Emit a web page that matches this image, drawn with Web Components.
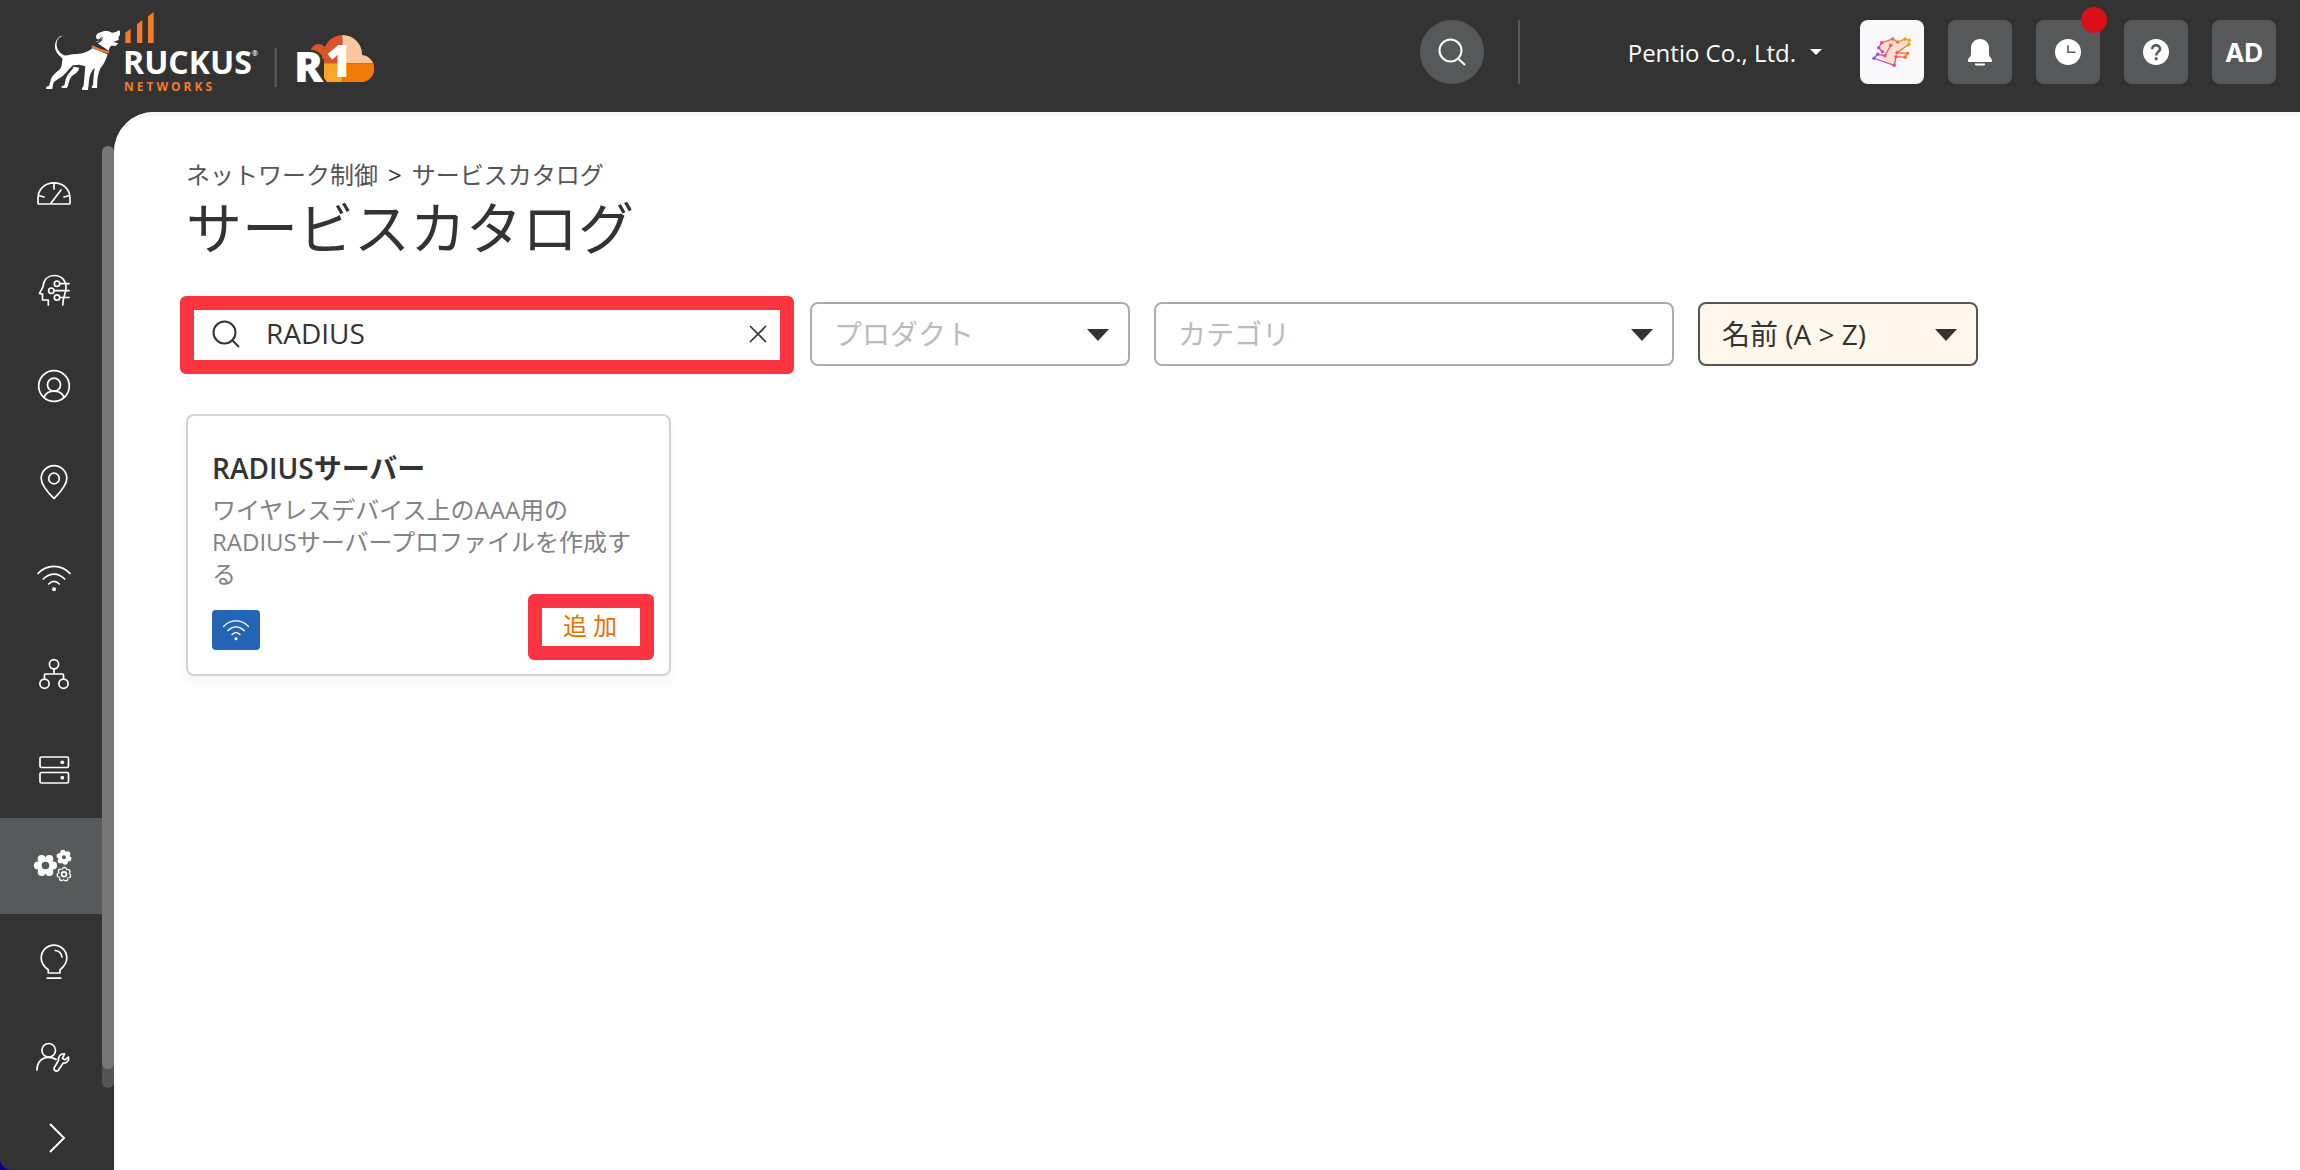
<!DOCTYPE html>
<html lang="ja">
<head>
<meta charset="utf-8">
<title>サービスカタログ</title>
<style>
html,body{margin:0;height:100%}
body{background:#06007a;color:#333;font-family:"Open Sans","Noto Sans CJK JP",sans-serif;font-size:24px}
</style>
</head>
<body>
<app-shell>
  <app-header slot="header"></app-header>
  <side-nav slot="nav"></side-nav>
  <catalog-page>
    <filter-search value="RADIUS"></filter-search>
    <filter-select label="プロダクト" basis="320"></filter-select>
    <filter-select label="カテゴリ" basis="520"></filter-select>
    <filter-select label="名前 (A &gt; Z)" basis="280" active></filter-select>
    <service-card slot="cards">
      <span slot="title">RADIUSサーバー</span>
      ワイヤレスデバイス上のAAA用のRADIUSサーバープロファイルを作成する
      <span slot="action">追 加</span>
    </service-card>
  </catalog-page>
</app-shell>
<script>
const define = (name, render) => customElements.define(name, class extends HTMLElement {
  connectedCallback() {
    if (this.shadowRoot) return;
    const root = this.attachShadow({ mode: "open" });
    root.innerHTML = `<style>*{box-sizing:border-box}:host{display:block;box-sizing:border-box}button,input,select{font:inherit;color:inherit;margin:0}button{border:0;background:none;padding:0;cursor:pointer}svg{display:block;flex:none;overflow:visible}</style>` + render(this);
  }
});

/* Scalloped gear: a disc with a ring of round lobes. */
const gear = (cx, cy, r, lobe, n, turn = 0) => {
  let s = `<circle cx="${cx}" cy="${cy}" r="${r}"/>`;
  for (let i = 0; i < n; i++) {
    const a = turn + i * 2 * Math.PI / n;
    s += `<circle cx="${(cx + r * Math.cos(a)).toFixed(2)}" cy="${(cy + r * Math.sin(a)).toFixed(2)}" r="${lobe}"/>`;
  }
  return s;
};

const ICONS = {
  gauge: `<path d="M2 27V22.500C2 13 9 6.800 18 6.800S34 13 34 22.500V27a1 1 0 0 1-1 1H3a1 1 0 0 1-1-1zM18 7v6M2.500 19.500l5.500 1.500M33.500 19.500L28 21M14.700 27.500L25 14"/>`,
  ai: `<path d="M12.300 33v-5H6.500v-5.800L3.500 21.500C4.500 18.500 7 16.500 7.200 13.500C8 7 12.500 3.500 18.500 3.500C25.500 3.500 30 8.500 30 15.500C30 22 27 24 26.800 33M24 11.700h9M18.300 18.700H33M24 25.500h9"/><circle cx="21" cy="11.700" r="2.700"/><circle cx="15.300" cy="18.700" r="2.700"/><circle cx="21" cy="25.500" r="2.700"/>`,
  user: `<circle cx="18" cy="18" r="15.300"/><circle cx="18" cy="16.700" r="6.500"/><path d="M8 29C10 25 13.500 23.200 18 23.200S26 25 28 29"/>`,
  pin: `<path d="M18 34.500C14 30.500 5.200 22 5.200 14.500a12.800 12.800 0 0 1 25.600 0C30.800 22 22 30.500 18 34.500z"/><circle cx="18" cy="14.500" r="5.300"/>`,
  wifi: `<path d="M2 13.5C11 4 25 4 34 13.5M7.300 19C14 12.500 22 12.500 28.700 19M12.700 24C16 20.700 20 20.700 23.300 24"/><circle cx="18" cy="29.300" r="2" fill="currentColor" stroke="none"/>`,
  tree: `<circle cx="18" cy="8.300" r="4.600"/><circle cx="8.500" cy="27.700" r="4.600"/><circle cx="27.500" cy="27.700" r="4.600"/><path d="M18 13v5M8.500 23v-4a1 1 0 0 1 1-1h17a1 1 0 0 1 1 1v4"/>`,
  server: `<rect x="4" y="5" width="28.500" height="10.500" rx="1.500"/><rect x="4" y="20.500" width="28.500" height="10.500" rx="1.500"/><circle cx="26.300" cy="10.300" r="1.900" fill="currentColor" stroke="none"/><circle cx="26.300" cy="25.700" r="1.900" fill="currentColor" stroke="none"/>`,
  gears: `<g fill="currentColor" stroke="none">${gear(9.5, 17.5, 7.6, 4, 6, 0)}${gear(28, 9.3, 4.9, 2.7, 6, .3)}${gear(28, 26.3, 5, 2.5, 7, .3)}</g><g fill="#565859" stroke="none"><circle cx="9.500" cy="17.500" r="3.800"/><circle cx="28" cy="9.300" r="2"/>${gear(28, 26.3, 4.2, 1.9, 7, .3)}</g><circle cx="28" cy="26.300" r="2.400"/>`,
  bulb: `<path d="M12.300 29v-3.200C8.500 23 5.200 19.500 5.200 14a12.800 12.800 0 0 1 25.600 0C30.800 19.500 27.500 23 24 25.800V29zM11.300 34.200h13.500M19.200 6.500C23 7 25.500 9.500 26 13"/>`,
  admin: `<circle cx="12.700" cy="10.300" r="6.800"/><path d="M1 30C1 22 6 17.300 12.500 17.300C15.500 17.300 18 18 20 19.500M28.500 13.800L26.500 18.500L29 19.800L32.500 17C33.500 20.500 30.500 23.500 27.200 23L22.500 30C21 32.200 17 30.500 18.300 27.500L22.500 20.500C22 16.500 24.500 13.500 28.500 13.800z"/>`
};

define("line-icon", el => `<style>:host{width:36px;height:36px}svg{width:100%;height:100%}</style>
<svg viewBox="0 0 36 36" fill="none" stroke="currentColor" stroke-width="1.700" stroke-linejoin="round" stroke-linecap="round" aria-hidden="true">${ICONS[el.getAttribute("name")]}</svg>`);

define("app-shell", () => `<style>
:host{display:flex;flex-direction:column;height:100vh;background:#333;border-bottom-left-radius:12px;overflow:hidden}
.row{display:flex;flex:1;min-height:0}
main{flex:1;min-width:0;background:#fff;border-top-left-radius:40px;box-shadow:inset 0 4px 0 #f8f8f8;overflow:auto}
</style><slot name="header"></slot><div class="row"><slot name="nav"></slot><main><slot></slot></main></div>`);

define("brand-logo", () => `<style>text{font-family:"Open Sans",sans-serif;font-weight:700}.mark{font-weight:800}</style>
<svg width="340" height="90" viewBox="40 5 340 90" role="img" aria-label="RUCKUS Networks R1">
<defs><clipPath id="cloud"><circle cx="1028" cy="163" r="58"/><circle cx="1082" cy="206" r="41"/><rect x="972" y="180" width="110" height="67"/><circle cx="956" cy="157" r="25"/></clipPath></defs>
<g transform="scale(.33333)">
<g fill="#fff">
<path d="M184 107C168 114 161 135 167 151C171 162 180 169 188 176C184 189 188 201 176 211C164 221 154 229 151 245L147 258L139 260L138 267H157L160 250C164 242 177 236 188 228C199 219 207 207 219 196L238 194L256 199C254 218 253 240 250 260L246 263V270H264L267 243C268 228 273 213 284 203C281 222 280 240 279 256L275 259L276 264H291L292 243C293 228 297 216 301 205C311 196 317 180 323 163L277 145C264 155 247 163 226 162C212 163 200 168 192 166C177 158 168 143 170 128C172 117 179 111 186 109z"/>
<path d="M221 200L238 203C236 213 229 220 219 226C210 232 207 243 204 257L200 264H185V259L193 256C196 244 197 233 205 222C211 214 218 209 221 200z"/>
<path d="M283 134C287 131 289 127 290 123C298 124 306 119 310 109C309 119 304 127 293 130L326 152C328 145 329 140 334 137L348 137L355 130L340 126L357 119C353 114 356 110 360 104V94L356 91C349 98 342 98 336 98C326 92 312 91 303 97C293 99 286 105 289 115C291 120 297 119 301 115L306 107C305 117 299 124 290 125z"/>
</g>
<path d="M276 139Q300 153 327 157" fill="none" stroke="#f47b2a" stroke-width="7"/>
<path d="M376 98L392 86V129H376zM411 73L427 60V129H411zM444 49L461 36V129H444z" fill="#f47b2a"/>
<path d="M827 144V261" stroke="#58595b" stroke-width="7"/>
<g clip-path="url(#cloud)"><path d="M920 90H1027V190H920z" fill="#da542a"/><path d="M1027 90H1130V190H1027z" fill="#fac6a0"/><path d="M920 190H1027V260H920z" fill="#fba42a"/><path d="M1027 190H1130V260H1027z" fill="#f17a04"/></g>
</g>
<text x="123" y="74" font-size="32" fill="#fff">RUCKUS</text>
<text x="252" y="56" font-size="7" fill="#fff">®</text>
<text x="124" y="91" font-size="12" letter-spacing="3" fill="#f47b2a">NETWORKS</text>
<text class="mark" x="294" y="82" font-size="43" fill="#fff" stroke="#333" stroke-width="5" paint-order="stroke">R</text>
<text class="mark" x="326" y="77" font-size="44" fill="#fff">1</text>
</svg>`);

define("app-header", () => `<style>
:host{display:flex;align-items:center;height:112px;padding:0 24px 8px 40px;color:#fff;flex:none}
brand-logo{margin-bottom:4px}
.tools{display:flex;align-items:center;margin-left:auto;gap:24px}
button{display:flex;align-items:center;justify-content:center}
.tool{width:64px;height:64px;border-radius:8px;background:#565859;position:relative}
.round{border-radius:50%}
.bar{width:2px;height:64px;background:#565859;margin:0 84px 0 10px}
.org{gap:14px;font-size:24px;margin-right:14px}
.light{background:#f8f8fb}
.dot{position:absolute;right:-7px;top:-13px;width:26px;height:26px;border-radius:50%;background:#d91019}
.ad{font-family:Inter,sans-serif;font-size:26px;font-weight:700}
</style>
<brand-logo></brand-logo>
<div class="tools">
<button class="tool round" aria-label="検索"><svg width="64" height="64" fill="none" stroke="#fff" stroke-width="2"><circle cx="30.500" cy="30.500" r="11"/><path d="M38 38.500L45 45"/></svg></button>
<span class="bar"></span>
<button class="org"><span>Pentio Co., Ltd.</span><svg width="12" height="6"><path d="M0 0H12L6 6z" fill="#fff"/></svg></button>
<button class="tool light" aria-label="AI"><svg width="64" height="64" fill="none"><defs><linearGradient id="g" gradientUnits="userSpaceOnUse" x1="14" y1="42" x2="50" y2="20"><stop stop-color="#8a4dff"/><stop offset=".35" stop-color="#e0489a"/><stop offset=".7" stop-color="#f26a3d"/><stop offset="1" stop-color="#eab30c"/></linearGradient></defs>
<path d="M22 23L33 19L38 22L45 19H49V24L37 33L48 34L45 37L36 37L34 45L18 37L25 35L19 28z" fill="#fde0cb"/>
<path d="M30.700 25.300L25 35.700L17.700 34.300L14 38.300L34.300 45.300L36 36.700L45 37.300L47.700 33.300L37 32.700L49 24.300L49.300 20.300L45 19L37.700 22L32.700 19L21.700 22.700L18.700 27.700L22.300 31.700" stroke="url(#g)" stroke-width="1.300"/>
<g fill="url(#g)">${[[30.7,25.3],[25,35.7],[17.7,34.3],[14,38.3],[34.3,45.3],[36,36.7],[45,37.3],[47.7,33.3],[37,32.7],[49,24.3],[49.3,20.3],[45,19],[37.7,22],[32.7,19],[21.7,22.7],[18.7,27.7],[22.3,31.7]].map(p => `<circle cx="${p[0]}" cy="${p[1]}" r="1.700"/>`).join("")}</g></svg></button>
<button class="tool" aria-label="通知"><svg width="64" height="64" fill="#fff"><path d="M32 19C37.500 19 41 23 41 28V34C41 37 44 38 44 40.500C44 41.500 43.500 42 42.500 42H21.500C20.500 42 20 41.500 20 40.500C20 38 23 37 23 34V28C23 23 26.500 19 32 19z"/><path d="M27 43.500H37V44.500Q37 45.500 36 45.500H28Q27 45.500 27 44.500z"/></svg></button>
<button class="tool" aria-label="アクティビティ"><svg width="64" height="64"><circle cx="32" cy="32" r="13" fill="#fff"/><path d="M32 25.500V32.300H39.500" fill="none" stroke="#565859" stroke-width="1.600"/></svg><span class="dot"></span></button>
<button class="tool" aria-label="ヘルプ"><svg width="64" height="64"><circle cx="32" cy="32" r="13" fill="#fff"/><path d="M28.200 29.200C28.200 24 36 24 36 29C36 32 32.200 31.500 32.200 35.500" fill="none" stroke="#565859" stroke-width="2.600"/><circle cx="32.200" cy="38.700" r="1.600" fill="#565859"/></svg></button>
<button class="tool ad">AD</button>
</div>`);

const NAV = [["gauge","ダッシュボード"],["ai","AIアシュアランス"],["user","クライアント"],["pin","会場"],["wifi","Wi-Fi"],["tree","有線"],["server","エッジ"],["gears","ネットワーク制御"],["bulb","ビジネスインサイト"],["admin","管理"]];
define("side-nav", () => `<style>
:host{display:flex;flex-direction:column;width:114px;flex:none;padding-top:34px;color:#fff}
.row{display:flex;flex:1;min-height:0}
nav{flex:1;overflow:hidden}
a{display:flex;align-items:center;justify-content:center;height:96px;padding-left:6px;color:#fff}
a.on{background:#565859}
.track{width:12px;margin-bottom:18px;border-radius:6px;background:#555;display:flex}
.thumb{flex:1;height:98%;border-radius:6px;background:#777}
button{height:64px;flex:none;display:flex;align-items:center;justify-content:center}
</style>
<div class="row"><nav>${NAV.map(n => `<a href="#${n[0]}" aria-label="${n[1]}"${n[0] === "gears" ? ' class="on" aria-current="page"' : ""}><line-icon name="${n[0]}"></line-icon></a>`).join("")}</nav><div class="track"><div class="thumb"></div></div></div>
<button aria-label="展開"><svg width="16" height="30" fill="none" stroke="#fff" stroke-width="2"><path d="M1 1L15 15L1 29"/></svg></button>`);

define("catalog-page", () => `<style>
:host{padding:45px 72px}
.crumbs{display:flex;gap:10px;line-height:36px;font-size:24px;color:#333}
.crumbs a,.crumbs .here{color:#555;text-decoration:none}
h1{margin:0 0 41px;font-size:56px;line-height:68px;font-weight:400}
.filters{display:flex;gap:24px;margin-bottom:48px}
.cards{display:flex;flex-wrap:wrap;gap:24px}
</style>
<div class="crumbs"><a href="#network">ネットワーク制御</a><span>&gt;</span><span class="here">サービスカタログ</span></div>
<h1>サービスカタログ</h1>
<div class="filters"><slot></slot></div>
<div class="cards"><slot name="cards"></slot></div>`);

/* Thick red call-out drawn over the edge of whatever it wraps. */
define("call-out", () => `<style>
:host{position:relative}
.ring{position:absolute;inset:-6px -8px -8px -6px;border:14px solid #fb3442;border-radius:6px;pointer-events:none}
</style><slot></slot><div class="ring"></div>`);

define("filter-search", el => `<style>
:host{flex:0 1 600px;min-width:0}
.box{display:flex;align-items:center;height:64px;border:2px solid #fb3442;border-radius:8px;padding:0 18px 0 24px;font-size:28px}
input{flex:1;min-width:0;border:0;outline:0;background:none;padding:0 0 2px;margin-left:26px}
</style>
<call-out><label class="box"><svg width="28" height="28" fill="none" stroke="#333" stroke-width="2"><circle cx="12.500" cy="12.500" r="11"/><path d="M20.500 20.500L27 27"/></svg>
<input type="text" aria-label="検索" value="${el.getAttribute("value")}">
<button aria-label="クリア"><svg width="16" height="16" stroke="#333" stroke-width="1.600"><path d="M0 0L16 16M16 0L0 16"/></svg></button></label></call-out>`);

define("filter-select", el => `<style>
:host{flex:0 1 ${el.getAttribute("basis")}px;min-width:0;position:relative}
select{appearance:none;display:block;width:100%;height:64px;border:2px solid #acacac;border-radius:8px;background:#fff;color:#bbb;padding:0 50px 0 22px;font-size:28px}
:host([active]) select{background:#fff7eb;border-color:#555;color:#333}
svg{position:absolute;right:21px;top:27px;pointer-events:none}
</style>
<select aria-label="${el.getAttribute("label")}"><option>${el.getAttribute("label").replace(">", "&gt;")}</option></select>
<svg width="22" height="12"><path d="M0 0H22L11 12z" fill="#333"/></svg>`);

define("service-card", () => `<style>
:host{flex:0 1 485px;border:2px solid #d3d3d3;border-radius:8px;background:#fff;padding:32px 23px 22px 24px;box-shadow:0 8px 12px rgba(0,0,0,.04)}
h2{margin:0 0 6px;font-size:28px;line-height:40px;font-weight:600}
p{margin:0 0 10px;font-size:24px;line-height:32px;color:#808284}
.foot{display:flex;align-items:flex-end;justify-content:space-between}
.tag{display:flex;align-items:center;justify-content:center;width:48px;height:40px;margin-bottom:2px;border-radius:4px;background:#2465b5;color:#fff}
.tag line-icon{width:28px;height:28px}
button{display:block;width:112px;height:52px;padding-bottom:4px;font-size:24px;color:#e57200}
</style>
<h2><slot name="title"></slot></h2><p><slot></slot></p>
<div class="foot"><span class="tag"><line-icon name="wifi"></line-icon></span><call-out><button><slot name="action"></slot></button></call-out></div>`);
</script>
</body>
</html>
